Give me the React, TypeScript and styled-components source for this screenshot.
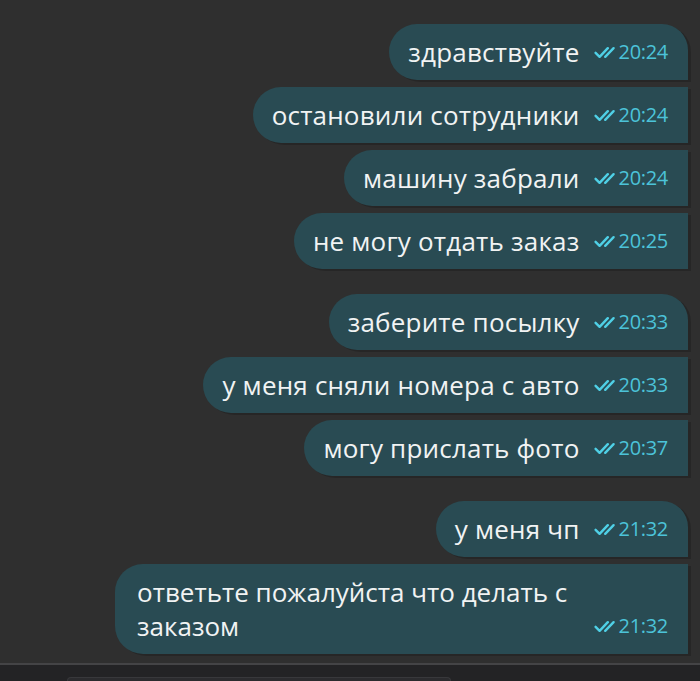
import React from "react";
import styled, { createGlobalStyle } from "styled-components";

const Global = createGlobalStyle`
  html, body { margin: 0; padding: 0; background: #2f2f2f; }
  body { font-family: "Open Sans", "Noto Sans", sans-serif; }
`;

const Page = styled.div`
  width: 700px;
  height: 681px;
  background: #2f2f2f;
  display: flex;
  flex-direction: column;
  overflow: hidden;
`;

const Feed = styled.div`
  display: flex;
  flex-direction: column;
  align-items: flex-end;
  padding: 24px 12px 0 0;
  gap: 25px;
`;

const Group = styled.div`
  display: flex;
  flex-direction: column;
  align-items: flex-end;
  gap: 7px;
`;

const Bubble = styled.div<{ $first?: boolean; $wide?: boolean }>`
  box-sizing: border-box;
  background: #294b53;
  color: #f1f3f3;
  border-radius: 28px ${(p) => (p.$first ? "26px" : "0")} 0 28px;
  box-shadow: 3px 2px 0 rgba(0, 0, 0, 0.18);
  font-size: 26px;
  line-height: 34px;
  padding: ${(p) => (p.$wide ? "11px 20px 11px 22px" : "11px 20px 11px 19px")};
  display: flex;
  align-items: ${(p) => (p.$wide ? "flex-end" : "center")};
  ${(p) => (p.$wide ? "width: 573px; justify-content: space-between;" : "")}
  ${(p) => (p.$wide ? "border-radius: 28px 0 0 28px;" : "")}
`;

const Text = styled.span<{ $wide?: boolean }>`
  letter-spacing: 0.2px;
  ${(p) => (p.$wide ? "max-width: 450px; letter-spacing: 0;" : "")}
`;

const Meta = styled.span`
  display: inline-flex;
  align-items: center;
  gap: 2px;
  margin-left: 14px;
  color: #4cc3d9;
  font-size: 20px;
  line-height: 34px;
  letter-spacing: -0.3px;
`;

const Tick = () => (
  <svg width="23" height="13" viewBox="0 0 23 13" fill="none">
    <path d="M1.6 6.8 L5.6 10.8 L13.8 2.2" stroke="#4fd0e6" strokeWidth="2.4" strokeLinecap="round" strokeLinejoin="round" />
    <path d="M11.2 10.8 L19.6 2.2" stroke="#4fd0e6" strokeWidth="2.4" strokeLinecap="round" />
  </svg>
);

const Footer = styled.div`
  margin-top: auto;
  height: 16px;
  border-top: 2px solid #444446;
  background: #232325;
  display: flex;
  align-items: flex-end;
  padding-left: 67px;
`;

const Input = styled.div`
  width: 382px;
  height: 3px;
  background: #2b2b2e;
  border-radius: 10px 10px 0 0;
  border: 1px solid #38383b;
  border-bottom: none;
`;

type Msg = { text: string; time: string };

const groups: Msg[][] = [
  [
    { text: "здравствуйте", time: "20:24" },
    { text: "остановили сотрудники", time: "20:24" },
    { text: "машину забрали", time: "20:24" },
    { text: "не могу отдать заказ", time: "20:25" },
  ],
  [
    { text: "заберите посылку", time: "20:33" },
    { text: "у меня сняли номера с авто", time: "20:33" },
    { text: "могу прислать фото", time: "20:37" },
  ],
];

export default function App() {
  return (
    <Page>
      <Global />
      <Feed>
        {groups.map((g, gi) => (
          <Group key={gi}>
            {g.map((m, i) => (
              <Bubble key={i} $first={i === 0}>
                <Text>{m.text}</Text>
                <Meta>
                  <Tick />
                  {m.time}
                </Meta>
              </Bubble>
            ))}
          </Group>
        ))}
        <Group>
          <Bubble $first>
            <Text>у меня чп</Text>
            <Meta>
              <Tick />
              21:32
            </Meta>
          </Bubble>
          <Bubble $wide>
            <Text $wide>ответьте пожалуйста что делать с заказом</Text>
            <Meta>
              <Tick />
              21:32
            </Meta>
          </Bubble>
        </Group>
      </Feed>
      <Footer>
        <Input />
      </Footer>
    </Page>
  );
}
